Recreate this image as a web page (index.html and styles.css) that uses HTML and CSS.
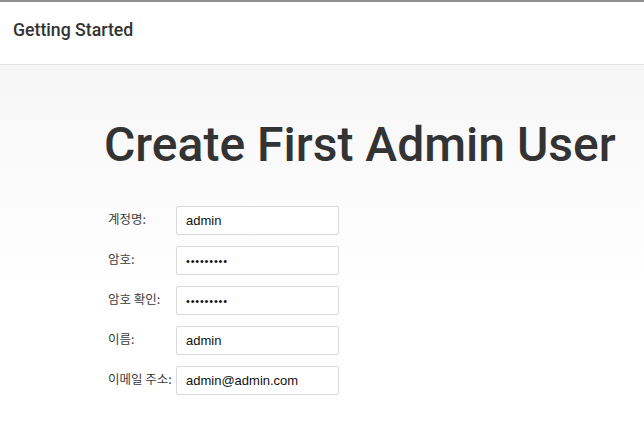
FILE: index.html
```html
<!DOCTYPE html>
<html>
<head>
<meta charset="utf-8">
<link rel="stylesheet" href="styles.css">
</head>
<body>
<div class="header">Getting Started</div>
<div class="content">
  <h1 class="title">Create First Admin User</h1>
  <div class="form">
    <div class="row"><label class="lbl">계정명:</label><div class="input">admin</div></div>
    <div class="row"><label class="lbl">암호:</label><div class="input dots">•••••••••</div></div>
    <div class="row"><label class="lbl">암호 확인:</label><div class="input dots">•••••••••</div></div>
    <div class="row"><label class="lbl">이름:</label><div class="input">admin</div></div>
    <div class="row"><label class="lbl">이메일 주소:</label><div class="input">admin@admin.com</div></div>
  </div>
</div>
</body>
</html>
```
FILE: styles.css
```css
html, body {
  margin: 0;
  padding: 0;
  background: #fff;
  height: 100%;
}
body {
  font-family: Roboto, "Noto Sans CJK KR", sans-serif;
  color: #333;
}
.header {
  border-top: 2px solid #8f8f8f;
  border-bottom: 1px solid #e3e3e3;
  box-sizing: border-box;
  height: 65px;
  padding: 0 0 6px 13px;
  display: flex;
  align-items: center;
  font-size: 17.7px;
  font-weight: 500;
  color: #333;
}
.content {
  background: linear-gradient(#f6f6f6 0, #fdfdfd 170px, #fff 230px);
  height: 364px;
  padding: 0;
}
.title {
  margin: 0;
  padding: 52px 0 0 104px;
  font-family: Roboto, sans-serif;
  font-weight: 500;
  font-size: 48px;
  line-height: 56px;
  color: #333;
}
.form {
  margin-top: 33px;
  padding-left: 108px;
  display: flex;
  flex-direction: column;
  gap: 11px;
}
.row {
  display: flex;
  align-items: flex-start;
}
.lbl {
  width: 68px;
  box-sizing: border-box;
  text-align: left;
  padding-top: 3px;
  font-family: "Noto Sans CJK KR", sans-serif;
  font-size: 12.5px;
  color: #3a3a3a;
}
.input {
  width: 163px;
  height: 29px;
  box-sizing: border-box;
  border: 1px solid #d9d9d9;
  border-radius: 2px;
  background: #fff;
  padding: 0 0 0 9px;
  display: flex;
  align-items: center;
  font-family: "Liberation Sans", Arial, sans-serif;
  font-size: 13px;
  color: #111;
}
.dots {
  font-size: 11px;
  letter-spacing: 0.8px;
}
```
